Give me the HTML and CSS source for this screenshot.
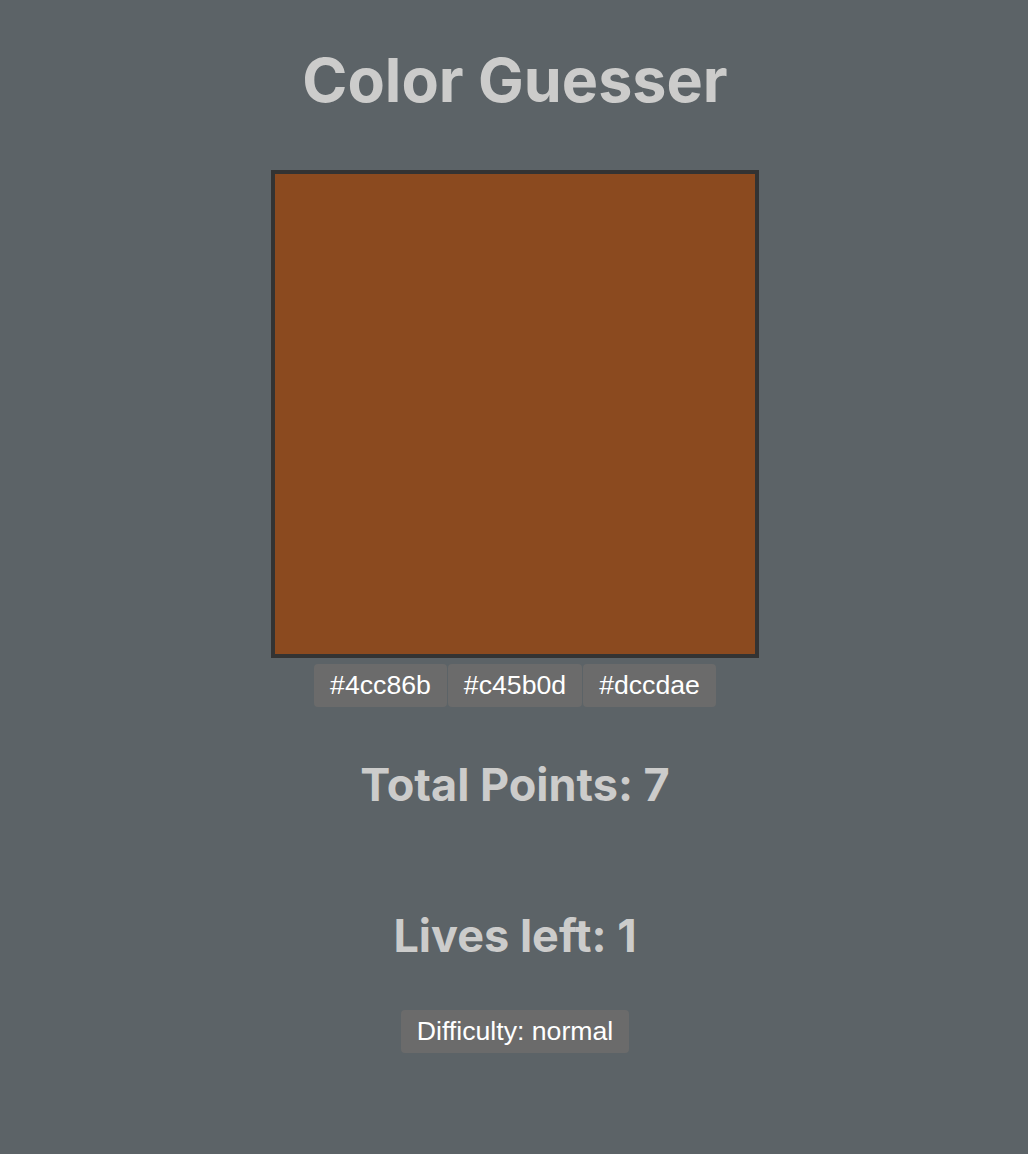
FILE: index.html
```html
<!DOCTYPE html>
<html>
<head>
<meta charset="utf-8">
<link rel="stylesheet" href="styles.css">
</head>
<body>
<main class="app">
  <h1 class="title">Color Guesser</h1>
  <div class="swatch"></div>
  <div class="choices">
    <button class="btn">#4cc86b</button>
    <button class="btn">#c45b0d</button>
    <button class="btn">#dccdae</button>
  </div>
  <h2 class="stat points">Total Points: 7</h2>
  <h2 class="stat lives">Lives left: 1</h2>
  <button class="btn difficulty">Difficulty: normal</button>
</main>
</body>
</html>
```
FILE: styles.css
```css
html, body {
  margin: 0;
  padding: 0;
  background: #5c6367;
  height: 100%;
}
.app {
  display: flex;
  flex-direction: column;
  align-items: center;
  padding-left: 2px;
  font-family: Inter, "Liberation Sans", sans-serif;
  color: #cccccb;
}
.title {
  font-size: 61px;
  font-weight: 700;
  margin: 48px 0 0;
  line-height: 64px;
}
.swatch {
  margin-top: 58px;
  width: 480px;
  height: 480px;
  background: #8b4a1f;
  border: 4px solid #333;
}
.choices {
  display: flex;
  gap: 1px;
  margin-top: 6px;
}
.btn {
  font-family: "Liberation Sans", Arial, sans-serif;
  font-size: 26.67px;
  line-height: 31px;
  color: #fff;
  background: #6b6b6b;
  border: none;
  border-radius: 4px;
  padding: 6px 16px;
}
.stat {
  font-size: 45px;
  font-weight: 700;
  margin: 0;
  line-height: 56px;
}
.points {
  margin-top: 50px;
}
.lives {
  margin-top: 95px;
}
.difficulty {
  margin-top: 46px;
}
```
